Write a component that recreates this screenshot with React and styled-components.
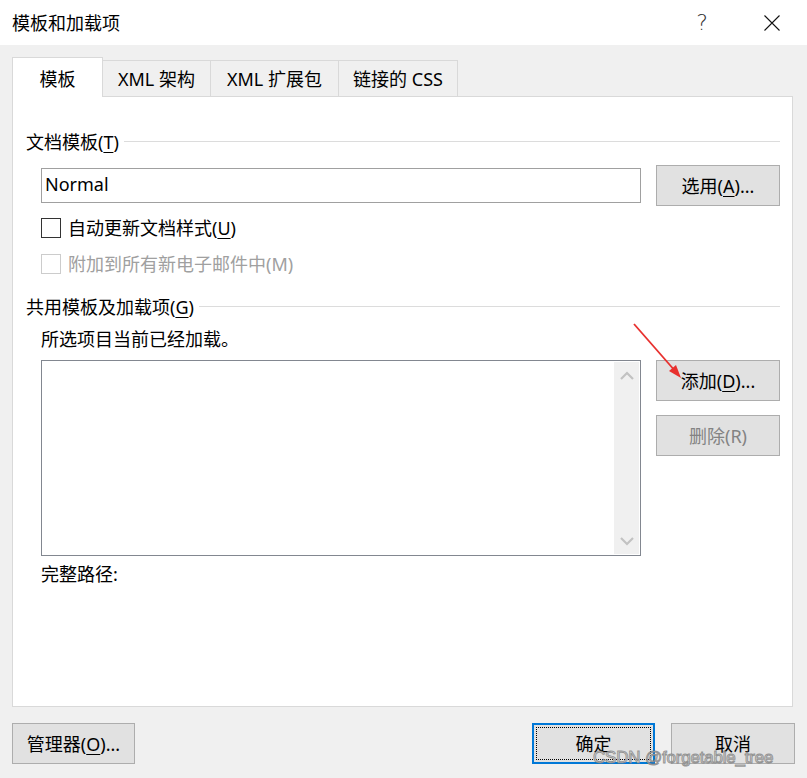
import React from 'react';
import styled, { createGlobalStyle } from 'styled-components';

const Global = createGlobalStyle`
  html, body { margin: 0; padding: 0; background: #f0f0f0; }
  body {
    font-family: "Noto Sans", "Noto Sans CJK SC", sans-serif;
    font-size: 18px;
    color: #000;
  }
`;

const Dialog = styled.div`
  position: relative;
  width: 807px;
  height: 778px;
  background: #f0f0f0;
  display: flex;
  flex-direction: column;
  overflow: hidden;
`;

const TitleBar = styled.div`
  height: 45px;
  background: #fff;
  display: flex;
  align-items: center;
  padding: 0 12px 0 12px;
  gap: 24px;
`;

const Title = styled.div`
  flex: 1;
  line-height: 24px;
  padding-top: 1px;
`;

const TitleButton = styled.div`
  width: 46px;
  height: 45px;
  display: flex;
  align-items: center;
  justify-content: center;
  font-size: 22px;
  font-weight: 300;
  font-family: "DejaVu Sans", "Noto Sans", sans-serif;
  color: #333;
`;

const Body = styled.div`
  flex: 1;
  display: flex;
  flex-direction: column;
  padding: 12px 14px 0 12px;
`;

const TabRow = styled.div`
  position: relative;
  z-index: 1;
  height: 40px;
  margin-bottom: -1px;
  display: flex;
  align-items: flex-end;
`;

const Tab = styled.div`
  box-sizing: border-box;
  width: ${p => p.$w}px;
  height: ${p => (p.$active ? 40 : 36)}px;
  margin-bottom: ${p => (p.$active ? 0 : 1)}px;
  margin-left: ${p => (p.$first ? 0 : -1)}px;
  border: 1px solid #d9d9d9;
  border-bottom: none;
  background: ${p => (p.$active ? '#fff' : '#f0f0f0')};
  position: relative;
  z-index: ${p => (p.$active ? 2 : 1)};
  display: flex;
  align-items: center;
  justify-content: center;
  line-height: 24px;
  padding-top: ${p => (p.$active ? 2 : 0)}px;
`;

const Panel = styled.div`
  box-sizing: border-box;
  height: 611px;
  background: #fff;
  border: 1px solid #d9d9d9;
  padding: 33px 12px 0 13px;
  display: flex;
  flex-direction: column;
`;

const GroupHeader = styled.div`
  display: flex;
  align-items: center;
  gap: 5px;
  height: 24px;
  line-height: 24px;
  margin-top: ${p => p.$mt || 0}px;
`;

const HeaderLine = styled.div`
  flex: 1;
  height: 1px;
  background: #dcdcdc;
  margin-top: -1px;
`;

const Indent = styled.div`
  padding-left: 15px;
  display: flex;
  flex-direction: column;
`;

const Mn = styled.span`
  text-decoration: underline;
  text-underline-offset: 3px;
  text-decoration-thickness: 1px;
`;

const InputRow = styled.div`
  display: flex;
  align-items: center;
  gap: 15px;
  margin-top: 11px;
  height: 41px;
`;

const TextBox = styled.div`
  box-sizing: border-box;
  flex: 1;
  height: 35px;
  border: 1px solid #a0a0a0;
  background: #fff;
  display: flex;
  align-items: center;
  padding: 0 0 3px 3px;
  line-height: 24px;
`;

const Button = styled.div`
  box-sizing: border-box;
  width: ${p => p.$w || 124}px;
  height: 41px;
  flex-shrink: 0;
  background: #e1e1e1;
  border: ${p => (p.$primary ? '2px solid #0078d7' : '1px solid #adadad')};
  color: ${p => (p.$disabled ? '#838383' : '#000')};
  display: flex;
  align-items: center;
  justify-content: center;
  line-height: 24px;
  position: relative;
`;

const FocusRing = styled.div`
  position: absolute;
  inset: 2px;
  border: 1px dotted #000;
  pointer-events: none;
`;

const CheckRow = styled.div`
  display: flex;
  align-items: center;
  gap: 7px;
  height: 24px;
  line-height: 24px;
  margin-top: ${p => p.$mt}px;
  color: ${p => (p.$disabled ? '#a0a0a0' : '#000')};
`;

const CheckBox = styled.div`
  box-sizing: border-box;
  width: 20px;
  height: 20px;
  background: #fff;
  border: 1px solid ${p => (p.$disabled ? '#cccccc' : '#333333')};
`;

const PlainText = styled.div`
  height: 24px;
  line-height: 24px;
  margin-top: ${p => p.$mt}px;
`;

const ListRow = styled.div`
  display: flex;
  gap: 15px;
  margin-top: 9px;
`;

const ListBox = styled.div`
  box-sizing: border-box;
  flex: 1;
  height: 196px;
  border: 1px solid #828790;
  background: #fff;
  display: flex;
  justify-content: flex-end;
  padding: 1px;
`;

const ScrollBar = styled.div`
  width: 25px;
  background: #f0f0f0;
  display: flex;
  flex-direction: column;
  align-items: center;
  justify-content: space-between;
  padding: 9px 0 8px;
`;

const ButtonColumn = styled.div`
  display: flex;
  flex-direction: column;
  gap: 14px;
`;

const Footer = styled.div`
  display: flex;
  align-items: center;
  margin-top: 16px;
  margin-right: -2px;
  gap: 16px;
`;

const Spacer = styled.div`
  flex: 1;
`;

const ArrowMark = styled.svg`
  position: absolute;
  left: 628px;
  top: 318px;
  pointer-events: none;
`;

const Watermark = styled.div`
  position: absolute;
  left: 593px;
  top: 747px;
  font-family: "Liberation Sans", Arial, sans-serif;
  font-size: 17px;
  line-height: 22px;
  color: rgba(235, 235, 235, 0.8);
  -webkit-text-stroke: 1px rgba(120, 120, 120, 0.75);
  letter-spacing: -0.2px;
  pointer-events: none;
`;

const Chevron = ({ up }) => (
  <svg width="14" height="9" viewBox="0 0 14 9">
    <path
      d={up ? 'M1 8 L7 2 L13 8' : 'M1 1 L7 7 L13 1'}
      fill="none"
      stroke="#c2c2c2"
      strokeWidth="2.2"
    />
  </svg>
);

export default function App() {
  return (
    <>
      <Global />
      <Dialog>
        <TitleBar>
          <Title>模板和加载项</Title>
          <TitleButton>?</TitleButton>
          <TitleButton>
            <svg width="16" height="16" viewBox="0 0 16 16">
              <path d="M0.5 0.5 L15.5 15.5 M15.5 0.5 L0.5 15.5" stroke="#111" strokeWidth="1.1" />
            </svg>
          </TitleButton>
        </TitleBar>
        <Body>
          <TabRow>
            <Tab $w={91} $active $first>模板</Tab>
            <Tab $w={109}>XML 架构</Tab>
            <Tab $w={129}>XML 扩展包</Tab>
            <Tab $w={120}>链接的 CSS</Tab>
          </TabRow>
          <Panel>
            <GroupHeader>
              <span>文档模板(<Mn>T</Mn>)</span>
              <HeaderLine />
            </GroupHeader>
            <Indent>
              <InputRow>
                <TextBox>Normal</TextBox>
                <Button>选用(<Mn>A</Mn>)...</Button>
              </InputRow>
              <CheckRow $mt={10}>
                <CheckBox />
                <span>自动更新文档样式(<Mn>U</Mn>)</span>
              </CheckRow>
              <CheckRow $mt={12} $disabled>
                <CheckBox $disabled />
                <span>附加到所有新电子邮件中(M)</span>
              </CheckRow>
            </Indent>
            <GroupHeader $mt={19}>
              <span>共用模板及加载项(<Mn>G</Mn>)</span>
              <HeaderLine />
            </GroupHeader>
            <Indent>
              <PlainText $mt={8}>所选项目当前已经加载。</PlainText>
              <ListRow>
                <ListBox>
                  <ScrollBar>
                    <Chevron up />
                    <Chevron />
                  </ScrollBar>
                </ListBox>
                <ButtonColumn>
                  <Button>添加(<Mn>D</Mn>)...</Button>
                  <Button $disabled>删除(R)</Button>
                </ButtonColumn>
              </ListRow>
              <PlainText $mt={6}>完整路径:</PlainText>
            </Indent>
          </Panel>
          <Footer>
            <Button $w={123}>管理器(<Mn>O</Mn>)...</Button>
            <Spacer />
            <Button $w={123} $primary>
              <FocusRing />
              确定
            </Button>
            <Button $w={124}>取消</Button>
          </Footer>
        </Body>
        <ArrowMark width="60" height="66" viewBox="0 0 60 66">
          <line x1="6" y1="6" x2="48" y2="54" stroke="#e8302e" strokeWidth="1.8" />
          <polygon points="53,60 41,53 48,47" fill="#e8302e" />
        </ArrowMark>
        <Watermark>CSDN @forgetable_tree</Watermark>
      </Dialog>
    </>
  );
}
